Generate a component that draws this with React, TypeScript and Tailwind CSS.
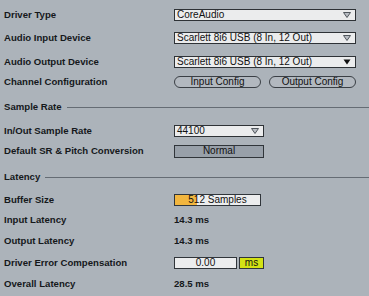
import React from "react";

const font = { fontFamily: '"Liberation Sans", Arial, sans-serif' };

const Arrow = ({ solid = false }: { solid?: boolean }) => (
  <svg width="8" height="6" viewBox="0 0 8 6" className="shrink-0">
    {solid ? (
      <polygon points="0.5,0.5 7.5,0.5 4,5.5" fill="#111" />
    ) : (
      <polygon points="0.5,0.5 7.5,0.5 4,5.5" fill="#b8bdc3" stroke="#50565c" strokeWidth="1" />
    )}
  </svg>
);

const Select = ({ value, width, solid }: { value: string; width: string; solid?: boolean }) => (
  <div
    className={`${width} flex h-[12px] items-center justify-between border border-[#2e3236] bg-[#ebeced] pl-[2px] pr-[4px] text-[10px] leading-none text-[#111]`}
  >
    <span>{value}</span>
    <Arrow solid={solid} />
  </div>
);

const Label = ({ children }: { children: React.ReactNode }) => (
  <div className="w-[174px] shrink-0 pl-[4px] text-[9.6px] font-bold leading-none text-[#15181b]">{children}</div>
);

const Heading = ({ title, cls }: { title: string; cls: string }) => (
  <div className={`${cls} flex h-[20px] items-center`}>
    <span className="pl-[4px] pr-[5px] text-[9.6px] font-bold leading-none text-[#15181b]">{title}</span>
    <div className="h-px flex-1 bg-[#656c74]" />
  </div>
);

export default function App() {
  return (
    <div className="flex h-[296px] w-[369px] flex-col overflow-hidden bg-[#acb3ba] pt-[3px]" style={font}>
      <div className="flex h-[23px] items-center">
        <Label>Driver Type</Label>
        <Select value="CoreAudio" width="w-[182px]" />
      </div>
      <div className="flex h-[24px] items-center">
        <Label>Audio Input Device</Label>
        <Select value="Scarlett 8i6 USB (8 In, 12 Out)" width="w-[182px]" />
      </div>
      <div className="flex h-[23px] items-center">
        <Label>Audio Output Device</Label>
        <Select value="Scarlett 8i6 USB (8 In, 12 Out)" width="w-[182px]" solid />
      </div>
      <div className="flex h-[17px] items-center">
        <Label>Channel Configuration</Label>
        <div className="flex gap-[8px] text-[10px] leading-none text-[#111]">
          <div className="flex h-[12px] w-[87px] items-center justify-center rounded-full border border-[#3a3f45] bg-[#b2b8bf]">
            Input Config
          </div>
          <div className="flex h-[12px] w-[87px] items-center justify-center rounded-full border border-[#3a3f45] bg-[#b2b8bf]">
            Output Config
          </div>
        </div>
      </div>

      <Heading title="Sample Rate" cls="mt-[7px]" />
      <div className="flex h-[27px] items-center">
        <Label>In/Out Sample Rate</Label>
        <Select value="44100" width="w-[90px]" />
      </div>
      <div className="flex h-[14px] items-center">
        <Label>Default SR &amp; Pitch Conversion</Label>
        <div className="flex h-[13px] w-[90px] items-center justify-center border border-[#30353a] bg-[#98a0a9] text-[10px] leading-none text-[#111]">
          Normal
        </div>
      </div>

      <Heading title="Latency" cls="mt-[9px]" />
      <div className="mt-[3px] flex h-[20px] items-center">
        <Label>Buffer Size</Label>
        <div className="relative flex h-[12px] w-[87px] items-center justify-center overflow-hidden border border-[#30353a] bg-[#ecedee] text-[10px] leading-none text-[#111]">
          <div className="absolute inset-y-0 left-0 w-[22px] bg-[#f2b63f]" />
          <span className="relative">512 Samples</span>
        </div>
      </div>
      <div className="flex h-[20px] items-center">
        <Label>Input Latency</Label>
        <span className="text-[9.6px] font-bold leading-none text-[#15181b]">14.3 ms</span>
      </div>
      <div className="flex h-[22px] items-center">
        <Label>Output Latency</Label>
        <span className="text-[9.6px] font-bold leading-none text-[#15181b]">14.3 ms</span>
      </div>
      <div className="flex h-[22px] items-center">
        <Label>Driver Error Compensation</Label>
        <div className="flex items-center gap-[2px] text-[10px] leading-none text-[#111]">
          <div className="flex h-[12px] w-[63px] items-center justify-center border border-[#30353a] bg-[#ecedee]">0.00</div>
          <div className="flex h-[12px] w-[25px] items-center justify-center border border-[#30353a] bg-[#d3e214]">ms</div>
        </div>
      </div>
      <div className="flex h-[20px] items-center">
        <Label>Overall Latency</Label>
        <span className="text-[9.6px] font-bold leading-none text-[#15181b]">28.5 ms</span>
      </div>
    </div>
  );
}
